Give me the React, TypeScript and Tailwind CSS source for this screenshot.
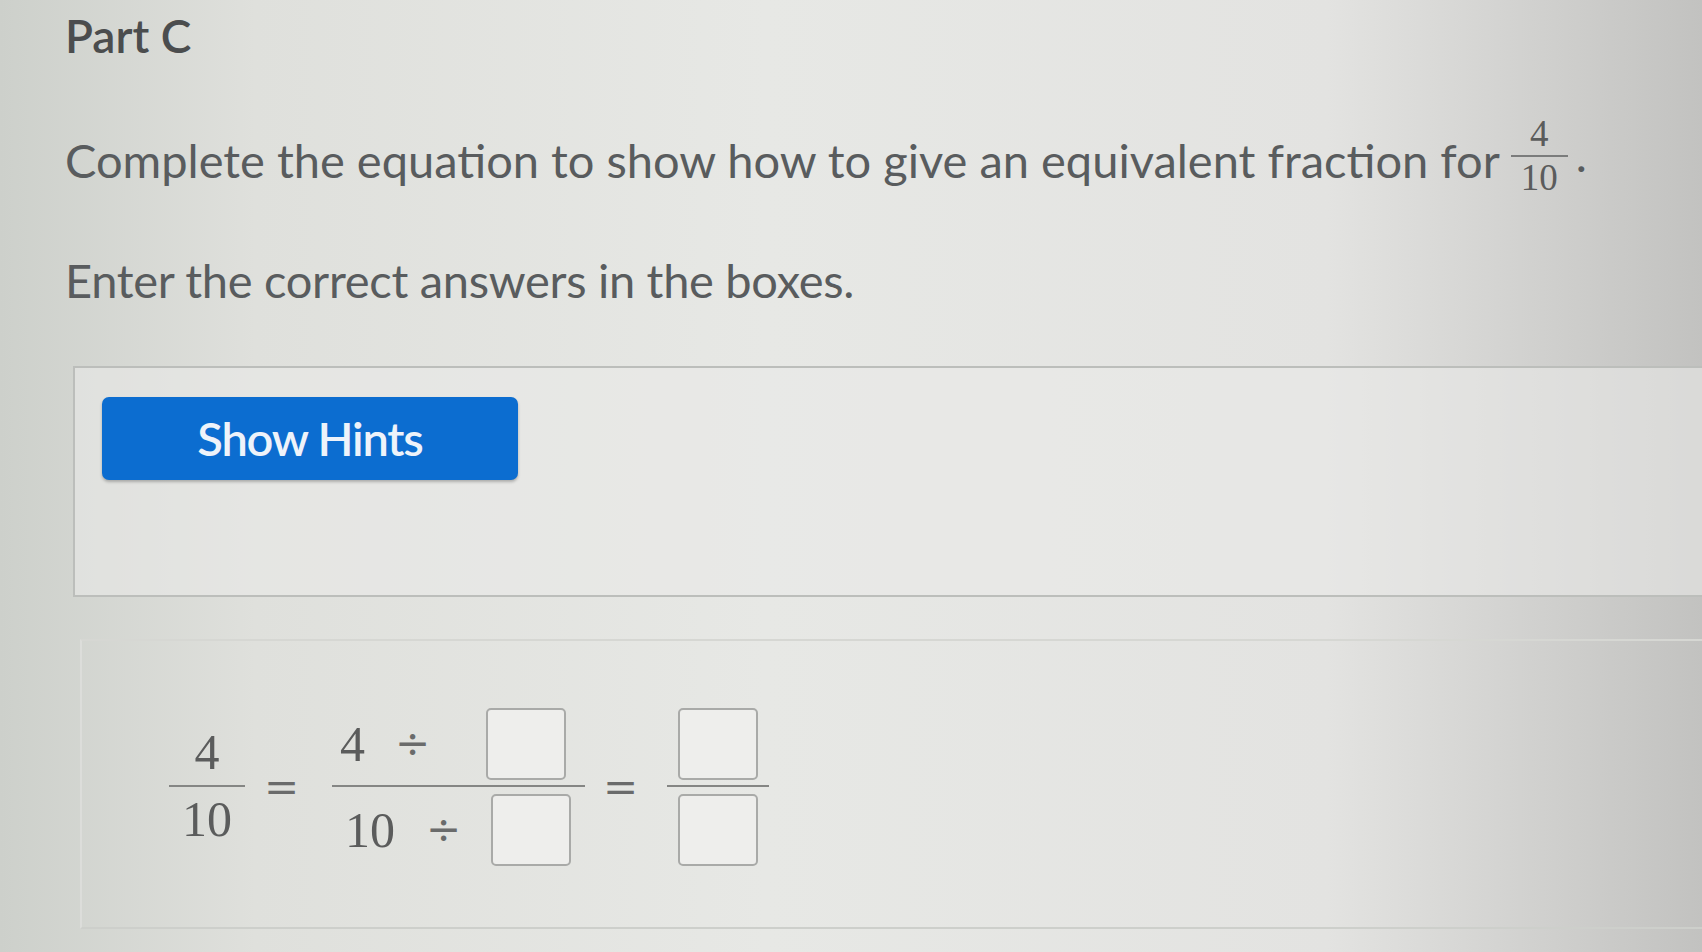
import type { ReactNode } from 'react'

function AnswerBox() {
  return (
    <div className="h-[72px] w-[80px] rounded-[5px] border-2 border-[#a9aaa8] bg-[#eeeeec]" />
  )
}

function Fraction({ top, bottom, barClass }: { top: ReactNode; bottom: ReactNode; barClass: string }) {
  return (
    <div className="flex flex-col">
      <div className="flex h-[77px] items-end pb-[5px]">{top}</div>
      <div className={`h-[2px] bg-[#858684] ${barClass}`} />
      <div className="flex h-[81px] items-start pt-[7px]">{bottom}</div>
    </div>
  )
}

const serif = "font-['Liberation_Serif',serif] text-[50px] leading-none text-[#5b5c5c]"
const op = "font-['DejaVu_Serif',serif] text-[42px] leading-none text-[#6a6b6b]"

export default function App() {
  return (
    <div className="min-h-screen w-full overflow-hidden bg-[linear-gradient(90deg,#cdd0cb_0%,#dfe0dc_15%,#e7e8e5_45%,#e3e3e1_78%,#c2c2c0_100%)] pl-[65px] font-['Lato',sans-serif]">
      <h2 className="pt-[8px] text-[46px] leading-[56px] font-semibold text-[#4b4d4e]">Part C</h2>

      <p className="mt-[68px] h-[56px] text-[47px] leading-[56px] text-[#595c5e]">
        Complete the equation to show how to give an equivalent fraction for{' '}
        <span className="relative -top-[10px] inline-flex flex-col items-center align-middle font-['Liberation_Serif',serif] text-[37px] leading-[18px] text-[#5b5c5c]">
          <span className="px-[14px]">4</span>
          <span className="my-[12px] h-[2px] w-[57px] bg-[#7b7c7c]" />
          <span>10</span>
        </span>
        <span className="relative -top-[6px] ml-[8px]">.</span>
      </p>

      <p className="mt-[64px] text-[47px] leading-[56px] tracking-[-0.3px] text-[#595c5e]">
        Enter the correct answers in the boxes.
      </p>

      <div className="ml-[8px] mt-[58px] h-[231px] border-2 border-r-0 border-[#bcbebb] bg-[#e9eae7]/60 pl-[27px] pt-[29px]">
        <button className="flex h-[83px] w-[416px] items-center justify-center rounded-[7px] bg-[#0c6dd0] text-[47px] font-semibold tracking-[-1.2px] text-[#eef3fa] shadow-[0_2px_3px_rgba(0,0,0,0.25)]">
          Show Hints
        </button>
      </div>

      <div className="ml-[15px] mt-[42px] flex h-[290px] items-center border-y-2 border-l-2 border-r-0 border-t-[#d6d7d3] border-l-[#dcddda] border-b-[#cdcfcb] pl-[87px] pt-[8px]">
        <Fraction
          barClass="w-[76px]"
          top={<span className={`${serif} w-full pb-[3px] text-center`}>4</span>}
          bottom={<span className={`${serif} w-full text-center`}>10</span>}
        />
        <span className={`${op} ml-[14px] mr-[28px] w-[45px] text-center`}>=</span>
        <Fraction
          barClass="w-[253px]"
          top={
            <div className="flex w-full items-center pl-[8px]">
              <span className={serif}>4</span>
              <span className={`${op} ml-[30px]`}>÷</span>
              <div className="ml-[56px]">
                <AnswerBox />
              </div>
            </div>
          }
          bottom={
            <div className="flex w-full items-center pl-[13px]">
              <span className={serif}>10</span>
              <span className={`${op} ml-[31px]`}>÷</span>
              <div className="ml-[30px]">
                <AnswerBox />
              </div>
            </div>
          }
        />
        <span className={`${op} ml-[17px] mr-[28px] w-[37px] text-center`}>=</span>
        <Fraction
          barClass="w-[102px]"
          top={
            <div className="flex w-full justify-center">
              <AnswerBox />
            </div>
          }
          bottom={
            <div className="flex w-full justify-center">
              <AnswerBox />
            </div>
          }
        />
      </div>
    </div>
  )
}
